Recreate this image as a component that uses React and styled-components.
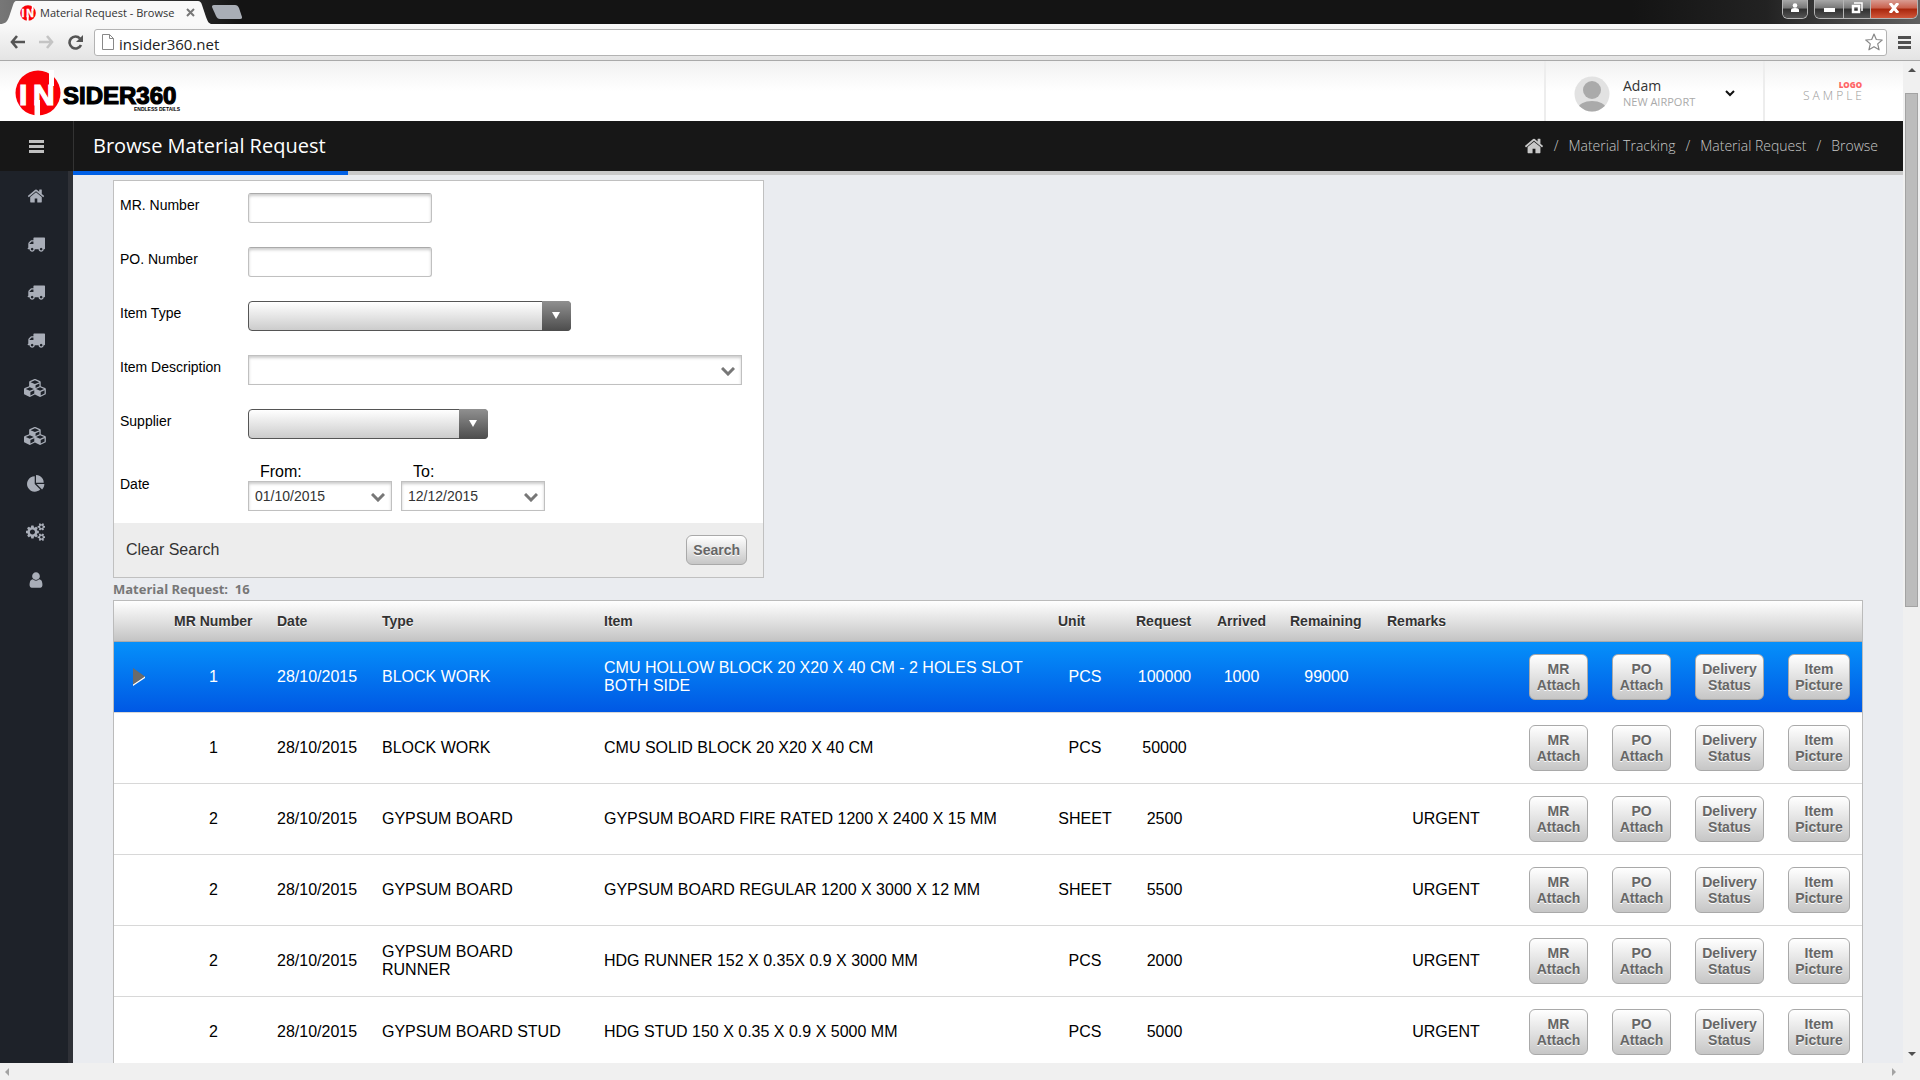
import React, { useState } from "react";
import styled, { createGlobalStyle } from "styled-components";

const ICONS = {
  home: {
    width: 1792,
    d: "M1472 992v480q0 26-19 45t-45 19h-384v-384h-256v384h-384q-26 0-45-19t-19-45v-480q0-1 .5-3t.5-3l575-474 575 474q1 2 1 6zm223-69l-62 74q-8 9-21 11h-3q-13 0-21-7l-692-577-692 577q-12 8-24 7-13-2-21-11l-62-74q-8-10-7-23.500t11-21.500l719-599q32-26 76-26t76 26l244 204v-195q0-14 9-23t23-9h192q14 0 23 9t9 23v408l219 182q10 8 11 21.500t-7 23.500z",
  },
  truck: {
    width: 1792,
    d: "M640 1408q0-52-38-90t-90-38-90 38-38 90 38 90 90 38 90-38 38-90zm-384-512h384v-256h-158q-13 0-22 9l-195 195q-9 9-9 22v30zm1280 512q0-52-38-90t-90-38-90 38-38 90 38 90 90 38 90-38 38-90zm256-1088v1024q0 15-4 26.500t-13.500 18.500-16.500 11.500-23.500 6-22.500 2-25.500 0-22.500-.5q0 106-75 181t-181 75-181-75-75-181h-384q0 106-75 181t-181 75-181-75-75-181h-64q-3 0-22.500.5t-25.500 0-22.500-2-23.500-6-16.500-11.500-13.500-18.500-4-26.500q0-26 19-45t45-19v-320q0-8-.5-35t0-38 2.500-34.500 6.500-37 14-30.500 22.500-30l198-198q19-19 50.500-32t58.500-13h160v-192q0-26 19-45t45-19h1024q26 0 45 19t19 45z",
  },
  cubes: {
    width: 2304,
    d: "M640 1632l384-192v-314l-384 164v342zm-64-454l404-173-404-173-404 173zm1088 454l384-192v-314l-384 164v342zm-64-454l404-173-404-173-404 173zm-448-293l384-165v-266l-384 164v267zm-64-379l441-189-441-189-441 189zm1088 518v416q0 36-19 67t-52 47l-448 224q-25 14-57 14t-57-14l-448-224q-4-2-7-4-2 2-7 4l-448 224q-25 14-57 14t-57-14l-448-224q-33-16-52-47t-19-67v-416q0-38 21.500-70t56.500-48l434-186v-400q0-38 21.500-70t56.500-48l448-192q23-10 50-10t50 10l448 192q35 16 56.500 48t21.500 70v400l434 186q36 16 57 48t21 70z",
  },
  pie: {
    width: 1792,
    d: "M768 890l546 546q-106 108-247.500 168t-298.500 60q-209 0-385.500-103t-279.500-279.500-103-385.500 103-385.500 279.500-279.500 385.500-103v762zm187 6h773q0 157-60 298.500t-168 247.500zm709-128h-768v-768q209 0 385.500 103t279.500 279.500 103 385.500z",
  },
  cogs: {
    width: 1920,
    d: "M896 896q0-106-75-181t-181-75-181 75-75 181 75 181 181 75 181-75 75-181zm768 512q0-52-38-90t-90-38-90 38-38 90q0 53 37.500 90.500t90.500 37.500 90.500-37.500 37.500-90.500zm0-1024q0-52-38-90t-90-38-90 38-38 90q0 53 37.500 90.500t90.500 37.500 90.500-37.500 37.500-90.500zm-384 421v185q0 10-7 19.500t-16 10.500l-155 24q-11 35-32 76 34 48 90 115 7 11 7 20 0 12-7 19-23 30-82.500 89.500t-78.500 59.500q-11 0-21-7l-115-90q-37 19-77 31-11 108-23 155-7 24-30 24h-186q-11 0-20-7.500t-10-17.500l-23-153q-34-10-75-31l-118 89q-7 7-20 7-11 0-21-8-144-133-144-160 0-9 7-19 10-14 41-53t47-61q-23-44-35-82l-152-24q-10-1-17-9.500t-7-19.500v-185q0-10 7-19.500t16-10.500l155-24q11-35 32-76-34-48-90-115-7-11-7-20 0-12 7-20 22-30 82-89t79-59q11 0 21 7l115 90q34-18 77-32 11-108 23-154 7-24 30-24h186q11 0 20 7.500t10 17.500l23 153q34 10 75 31l118-89q8-7 20-7 11 0 21 8 144 133 144 160 0 8-7 19-12 16-42 54t-45 60q23 48 34 82l152 23q10 2 17 10.500t7 19.500zm640 533v140q0 16-149 31-12 27-30 52 51 113 51 138 0 4-4 7-122 71-124 71-8 0-46-47t-52-68q-20 2-30 2t-30-2q-14 21-52 68t-46 47q-2 0-124-71-4-3-4-7 0-25 51-138-18-25-30-52-149-15-149-31v-140q0-16 149-31 13-29 30-52-51-113-51-138 0-4 4-7 4-2 35-20t59-34 30-16q8 0 46 46.500t52 67.500q20-2 30-2t30 2q51-71 92-112l6-2q4 0 124 70 4 3 4 7 0 25-51 138 17 23 30 52 149 15 149 31zm0-1024v140q0 16-149 31-12 27-30 52 51 113 51 138 0 4-4 7-122 71-124 71-8 0-46-47t-52-68q-20 2-30 2t-30-2q-14 21-52 68t-46 47q-2 0-124-71-4-3-4-7 0-25 51-138-18-25-30-52-149-15-149-31v-140q0-16 149-31 13-29 30-52-51-113-51-138 0-4 4-7 4-2 35-20t59-34 30-16q8 0 46 46.500t52 67.500q20-2 30-2t30 2q51-71 92-112l6-2q4 0 124 70 4 3 4 7 0 25-51 138 17 23 30 52 149 15 149 31z",
  },
  user: {
    width: 1792,
    d: "M1536 1399q0 109-62.500 187t-150.500 78h-854q-88 0-150.500-78t-62.500-187q0-85 8.500-160.500t31.500-152 58.500-131 94-89 134.500-34.500q131 128 313 128t313-128q76 0 134.500 34.500t94 89 58.500 131 31.500 152 8.500 160.500zm-256-887q0 159-112.500 271.500t-271.500 112.500-271.500-112.500-112.500-271.500 112.500-271.500 271.500-112.500 271.500 112.500 112.500 271.500z",
  },
};

const MENU = [
  ["home", "Home"],
  ["truck", "Material Tracking"],
  ["truck", "Deliveries"],
  ["truck", "Shipments"],
  ["cubes", "Inventory"],
  ["cubes", "Stock"],
  ["pie", "Reports"],
  ["cogs", "Settings"],
  ["user", "Account"],
];

const COLUMNS = [
  { title: "", width: 48 },
  { title: "MR Number", width: 103 },
  { title: "Date", width: 105 },
  { title: "Type", width: 222 },
  { title: "Item" },
  { title: "Unit", width: 78 },
  { title: "Request", width: 81 },
  { title: "Arrived", width: 73 },
  { title: "Remaining", width: 97 },
  { title: "Remarks", width: 142 },
  { title: "", width: 83 },
  { title: "", width: 83 },
  { title: "", width: 93 },
  { title: "", width: 86 },
];

const ROWS = [
  { mr: 1, type: "BLOCK WORK", item: "CMU HOLLOW BLOCK 20 X20 X 40 CM - 2 HOLES SLOT BOTH SIDE", unit: "PCS", request: 100000, arrived: 1000, remaining: 99000 },
  { mr: 1, type: "BLOCK WORK", item: "CMU SOLID BLOCK 20 X20 X 40 CM", unit: "PCS", request: 50000 },
  { mr: 2, type: "GYPSUM BOARD", item: "GYPSUM BOARD FIRE RATED 1200 X 2400 X 15 MM", unit: "SHEET", request: 2500, remarks: "URGENT" },
  { mr: 2, type: "GYPSUM BOARD", item: "GYPSUM BOARD REGULAR 1200 X 3000 X 12 MM", unit: "SHEET", request: 5500, remarks: "URGENT" },
  { mr: 2, type: "GYPSUM BOARD RUNNER", item: "HDG RUNNER 152 X 0.35X 0.9 X 3000 MM", unit: "PCS", request: 2000, remarks: "URGENT" },
  { mr: 2, type: "GYPSUM BOARD STUD", item: "HDG STUD 150 X 0.35 X 0.9 X 5000 MM", unit: "PCS", request: 5000, remarks: "URGENT" },
];

const ACTIONS = [
  ["MR", "Attach"],
  ["PO", "Attach"],
  ["Delivery", "Status"],
  ["Item", "Picture"],
];

const Icon = ({ name, size }) => (
  <svg
    height={size}
    width={(size * ICONS[name].width) / 1792}
    viewBox={`0 0 ${ICONS[name].width} 1792`}
    fill="currentColor"
    aria-hidden="true"
  >
    <path d={ICONS[name].d} />
  </svg>
);

const Badge = () => (
  <>
    <circle cx="23" cy="23" r="22.500" fill="#fb0007" />
    <rect x="34" y="0" width="5" height="16" fill="#fff" />
    <rect x="19.500" y="30" width="5.500" height="16" fill="#fff" />
    <g fill="#fff" stroke="#fff" strokeWidth="1.200" fontFamily="Liberation Sans, sans-serif" fontWeight="700" fontSize="30">
      <text x="4" y="34.500">I</text>
      <text x="18" y="34.500">N</text>
    </g>
  </>
);

const Logo = () => (
  <svg width="168" height="46" viewBox="0 0 168 46" role="img" aria-label="Insider360">
    <Badge />
    <g fontFamily="Liberation Sans, sans-serif" fontWeight="700" fill="#000">
      <text x="48" y="33.500" fontSize="24" stroke="#000" strokeWidth="1.200">SIDER360</text>
      <text x="119" y="40.500" fontSize="5">ENDLESS DETAILS</text>
    </g>
  </svg>
);

const Chevron = () => (
  <svg width="14" height="9" viewBox="0 0 14 9" fill="none" stroke="#777" strokeWidth="3">
    <path d="M1 1l6 6 6-6" />
  </svg>
);

const Browser = () => (
  <>
    <TitleBar>
      <svg width="16" height="24" viewBox="0 0 16 24">
        <path d="M0 24c5 0 7-2 9-7l4-12c1-3 2-4 3-4v23z" fill="#f9f9f9" />
      </svg>
      <Tab>
        <svg width="16" height="16" viewBox="0 0 46 46"><Badge /></svg>
        <TabTitle>Material Request - Browse</TabTitle>
        <PlainButton aria-label="Close tab">
          <svg width="9" height="9" viewBox="0 0 9 9" stroke="#777" strokeWidth="2"><path d="M1 1l7 7M8 1l-7 7" /></svg>
        </PlainButton>
      </Tab>
      <svg width="14" height="24" viewBox="0 0 14 24">
        <path d="M0 1c2 0 3 1 4 4l4 12c2 5 3 7 6 7H0z" fill="#f9f9f9" />
      </svg>
      <PlainButton aria-label="New tab">
        <svg width="30" height="14" viewBox="0 0 30 14"><path d="M2 0h21c2 0 3 1 4 3l3 9c0 1 0 2-2 2H8c-2 0-3-1-4-3L0 2c0-1 0-2 2-2z" fill="#a9aeb6" /></svg>
      </PlainButton>
      <WindowControls>
        <ControlGroup>
          <Control $width={24} aria-label="Profile">
            <svg width="10" height="10" viewBox="0 0 10 10" fill="#fff"><circle cx="5" cy="2.500" r="2.300" /><path d="M1 9V7q0-2 4-2t4 2v2z" /></svg>
          </Control>
        </ControlGroup>
        <ControlGroup>
          <Control $width={28} aria-label="Minimize">
            <svg width="11" height="10" viewBox="0 0 11 10"><path d="M0 5h11v4H0z" fill="#fff" /></svg>
          </Control>
          <Control $width={27} aria-label="Restore">
            <svg width="12" height="12" viewBox="0 0 12 12" fill="none" stroke="#fff"><path d="M3 1h8v8" strokeWidth="1.500" /><path d="M2 4h6v6H2z" strokeWidth="2.500" /></svg>
          </Control>
          <Control $width={47} $close aria-label="Close window">
            <svg width="12" height="10" viewBox="0 0 12 10" stroke="#fff" strokeWidth="3"><path d="M2 0l8 10M10 0L2 10" /></svg>
          </Control>
        </ControlGroup>
      </WindowControls>
    </TitleBar>
    <Toolbar>
      <PlainButton aria-label="Back">
        <svg width="15" height="14" viewBox="0 0 15 14" fill="none" stroke="#555" strokeWidth="2.600"><path d="M7 1L2 7l5 6M2 7h13" /></svg>
      </PlainButton>
      <PlainButton aria-label="Forward">
        <svg width="15" height="14" viewBox="0 0 15 14" fill="none" stroke="#c4c4c4" strokeWidth="2.600"><path d="M8 1l5 6-5 6M13 7H0" /></svg>
      </PlainButton>
      <PlainButton aria-label="Reload">
        <svg width="15" height="15" viewBox="0 0 15 15"><path d="M12 3.500A6 6 0 1 0 13 10" fill="none" stroke="#555" strokeWidth="2.600" /><path d="M15 0v7H8z" fill="#555" /></svg>
      </PlainButton>
      <AddressBox>
        <svg width="12" height="16" viewBox="0 0 12 16" fill="#fff" stroke="#888"><path d="M.5.5h7l4 4v11H.5zM7.500.5v4h4" /></svg>
        <Address aria-label="Address" defaultValue="insider360.net" />
        <PlainButton aria-label="Bookmark">
          <svg width="18" height="18" viewBox="0 0 18 18" fill="#fff" stroke="#888" strokeWidth="1.200" strokeLinejoin="round"><path d="M9 1l2.300 5.500 5.900.5-4.500 3.900 1.400 5.900L9 13.700l-5.100 3.100 1.400-5.900L.8 7l5.900-.5z" /></svg>
        </PlainButton>
      </AddressBox>
      <PlainButton aria-label="Menu">
        <svg width="13" height="13" viewBox="0 0 13 13" fill="#4f4f4f"><path d="M0 0h13v3H0zM0 5h13v3H0zM0 10h13v3H0z" /></svg>
      </PlainButton>
    </Toolbar>
  </>
);

const Header = () => (
  <HeaderBar>
    <LogoLink href="#"><Logo /></LogoLink>
    <UserMenu>
      <svg width="36" height="36" viewBox="0 0 36 36">
        <clipPath id="face"><circle cx="18" cy="18" r="17.500" /></clipPath>
        <circle cx="18" cy="18" r="17.500" fill="#e2e2e2" />
        <g clipPath="url(#face)" fill="#aaa"><circle cx="18" cy="14" r="9" /><ellipse cx="18" cy="33" rx="14" ry="8" /></g>
      </svg>
      <UserText>
        <UserName>Adam</UserName>
        <Project>NEW AIRPORT</Project>
      </UserText>
      <svg width="10" height="7" viewBox="0 0 10 7" fill="none" stroke="#111" strokeWidth="2"><path d="M1 1l4 4 4-4" /></svg>
    </UserMenu>
    <Sample>
      <SampleTop>LOGO</SampleTop>
      <SampleName>SAMPLE</SampleName>
    </Sample>
  </HeaderBar>
);

const PageBar = () => (
  <Bar>
    <Burger aria-label="Toggle menu">
      <svg width="15" height="13" viewBox="0 0 15 13" fill="#c0c0c0"><path d="M0 0h15v3H0zM0 5h15v3H0zM0 10h15v3H0z" /></svg>
    </Burger>
    <Title>Browse Material Request</Title>
    <Crumbs aria-label="Breadcrumb">
      <a href="#" aria-label="Home"><Icon name="home" size={20} /></a>
      <span>/</span>
      <a href="#">Material Tracking</a>
      <span>/</span>
      <a href="#">Material Request</a>
      <span>/</span>
      <a href="#">Browse</a>
    </Crumbs>
  </Bar>
);

const DropDown = ({ id, width, dark, value, label }) => (
  <SelectBox $width={width}>
    <Select id={id} $dark={dark} aria-label={label}>
      <option>{value}</option>
    </Select>
    <SelectArrow $dark={dark}>
      {dark ? (
        <svg width="8" height="7" viewBox="0 0 8 7"><path d="M0 0h8L4 7z" fill="#fff" /></svg>
      ) : (
        <Chevron />
      )}
    </SelectArrow>
  </SelectBox>
);

const SearchForm = () => (
  <Panel onSubmit={(e) => e.preventDefault()}>
    <Fields>
      <Label htmlFor="mr">MR. Number</Label>
      <TextInput id="mr" type="text" />
      <Label htmlFor="po">PO. Number</Label>
      <TextInput id="po" type="text" />
      <Label htmlFor="type">Item Type</Label>
      <DropDown id="type" width={323} dark value="" />
      <Label htmlFor="description">Item Description</Label>
      <DropDown id="description" width={494} value="" />
      <Label htmlFor="supplier">Supplier</Label>
      <DropDown id="supplier" width={240} dark value="" />
    </Fields>
    <DateFields>
      <DateTitle>Date</DateTitle>
      <div>
        <DateLabel htmlFor="from">From:</DateLabel>
        <DropDown id="from" width={144} value="01/10/2015" />
      </div>
      <div>
        <DateLabel htmlFor="to">To:</DateLabel>
        <DropDown id="to" width={144} value="12/12/2015" />
      </div>
    </DateFields>
    <PanelFooter>
      <ClearLink href="#">Clear Search</ClearLink>
      <GreyButton type="submit">Search</GreyButton>
    </PanelFooter>
  </Panel>
);

const RequestTable = () => {
  const [selected, setSelected] = useState(0);

  return (
    <Table>
      <colgroup>
        {COLUMNS.map((col, index) => (<Col key={index} $width={col.width} />))}
      </colgroup>
      <thead>
        <tr>
          {COLUMNS.map((col, index) => (<Th key={index}>{col.title}</Th>))}
        </tr>
      </thead>
      <tbody>
        {ROWS.map((row, index) => (
          <Row key={index} $active={index === selected} onClick={() => setSelected(index)}>
            <Td>
              {index === selected && (
                <Marker width="14" height="18" viewBox="0 0 14 18"><path d="M1 18v-2L13 8v2z" fill="#fff" /><path d="M1 0v16.500L13 8.500z" fill="#6b6b6b" /></Marker>
              )}
            </Td>
            <Td $center>{row.mr}</Td>
            <Td>28/10/2015</Td>
            <Td>{row.type}</Td>
            <Td>{row.item}</Td>
            <Td $center>{row.unit}</Td>
            <Td $center>{row.request}</Td>
            <Td $center>{row.arrived}</Td>
            <Td $center>{row.remaining}</Td>
            <Td $center>{row.remarks}</Td>
            {ACTIONS.map(([first, second]) => (
              <Td key={first}>
                <GreyButton $wide>{first}<br />{second}</GreyButton>
              </Td>
            ))}
          </Row>
        ))}
      </tbody>
    </Table>
  );
};

const App = () => (
  <Window>
    <GlobalStyle />
    <Browser />
    <Viewport>
      <Page>
        <Header />
        <PageBar />
        <Body>
          <Sidebar aria-label="Main">
            {MENU.map(([icon, label]) => (
              <SideLink key={label} href="#" aria-label={label}><Icon name={icon} size={18} /></SideLink>
            ))}
          </Sidebar>
          <Main>
            <Progress><ProgressValue /></Progress>
            <Content>
              <SearchForm />
              <Count>Material Request:&nbsp; 16</Count>
              <RequestTable />
            </Content>
          </Main>
        </Body>
      </Page>
      <ScrollY>
        <svg width="8" height="4" viewBox="0 0 8 4"><path d="M0 4l4-4 4 4z" fill="#505050" /></svg>
        <Thumb />
        <svg width="8" height="4" viewBox="0 0 8 4"><path d="M0 0l4 4 4-4z" fill="#505050" /></svg>
      </ScrollY>
    </Viewport>
    <ScrollX>
      <svg width="4" height="8" viewBox="0 0 4 8"><path d="M4 0L0 4l4 4z" fill="#a3a3a3" /></svg>
      <svg width="4" height="8" viewBox="0 0 4 8"><path d="M0 0l4 4-4 4z" fill="#a3a3a3" /></svg>
    </ScrollX>
  </Window>
);

export default App;

const GlobalStyle = createGlobalStyle`
  * {
    box-sizing: border-box;
  }
  body {
    margin: 0;
    font-family: "Liberation Sans", Arial, sans-serif;
    font-size: 16px;
    color: #000;
  }
  a {
    color: inherit;
    text-decoration: none;
  }
  svg {
    display: block;
    flex: none;
  }
`;

const Window = styled.div`
  display: flex;
  flex-direction: column;
  height: 100vh;
  overflow: hidden;
`;
const TitleBar = styled.div`
  display: flex;
  align-items: center;
  flex: none;
  height: 24px;
  background: linear-gradient(90deg, #777 0, #141414 240px, #141414 85%, #222 92%, #606060 100%);
`;
const Tab = styled.div`
  display: flex;
  align-items: center;
  gap: 4px;
  width: 182px;
  height: 23px;
  margin-top: 1px;
  padding: 0 3px 0 4px;
  background: #f9f9f9;
`;
const TabTitle = styled.span`
  flex: 1;
  font: 11px/18px "Open Sans", sans-serif;
  color: #333;
  white-space: nowrap;
`;
const PlainButton = styled.button`
  flex: none;
  padding: 0;
  border: 0;
  background: none;
  cursor: pointer;
`;
const WindowControls = styled.div`
  display: flex;
  align-self: flex-start;
  gap: 6px;
  margin-left: auto;
  margin-right: 2px;
`;
const ControlGroup = styled.div`
  display: flex;
  height: 19px;
  border: 1px solid #b5b5b5;
  border-top: 0;
  border-radius: 0 0 6px 6px;
  overflow: hidden;
`;
const Control = styled.button`
  display: flex;
  align-items: center;
  justify-content: center;
  width: ${({ $width }) => $width}px;
  height: 18px;
  padding: 0 0 2px;
  border: 0;
  background: ${({ $close }) =>
    $close
      ? "linear-gradient(#d99c92 0, #c9604c 45%, #a8260c 50%, #d0563a 100%)"
      : "linear-gradient(#a8a8a8 0, #777 45%, #2f2f2f 50%, #555 100%)"};

  & + & {
    border-left: 1px solid #b5b5b5;
  }
`;
const Toolbar = styled.div`
  display: flex;
  align-items: center;
  flex: none;
  gap: 14px;
  height: 37px;
  padding: 0 9px 0 10px;
  background: linear-gradient(#f9f9f9, #e4e4e4);
  border-bottom: 1px solid #a9a9a9;
`;
const AddressBox = styled.div`
  display: flex;
  align-items: center;
  flex: 1;
  gap: 5px;
  height: 27px;
  margin: 0 -3px;
  padding: 0 3px 0 7px;
  background: #fff;
  border: 1px solid #b3b3b3;
  border-radius: 3px;
`;
const Address = styled.input`
  flex: 1;
  padding: 4px 0 0;
  border: 0;
  outline: 0;
  font: 15px/20px "Open Sans", sans-serif;
  color: #222;
`;
const Viewport = styled.div`
  display: flex;
  flex: 1;
  min-height: 0;
`;
const Page = styled.div`
  display: flex;
  flex-direction: column;
  flex: 1;
  min-width: 0;
  overflow: hidden;
  background: #eaecf0;
`;
const HeaderBar = styled.header`
  display: flex;
  flex: none;
  height: 60px;
  background: linear-gradient(#f1f1f1, #fff 50%);
`;
const LogoLink = styled.a`
  flex: 1;
  padding: 9px 15px;
`;
const UserMenu = styled.div`
  display: flex;
  align-items: center;
  width: 219px;
  padding: 5px 0 0 28px;
  border-left: 2px solid #ededed;
`;
const UserText = styled.div`
  width: 102px;
  margin-left: 13px;
  font-family: "Open Sans", sans-serif;
`;
const UserName = styled.div`
  font-size: 14px;
  line-height: 16px;
  color: #333;
`;
const Project = styled.div`
  font-size: 11px;
  line-height: 16px;
  color: #aaa;
`;
const Sample = styled.div`
  display: flex;
  flex-direction: column;
  align-items: flex-end;
  width: 140px;
  padding: 19px 38px 0 0;
  border-left: 2px solid #ededed;
  font-family: "Open Sans", sans-serif;
`;
const SampleTop = styled.span`
  font-size: 8px;
  font-weight: 800;
  line-height: 10px;
  color: #ff6464;
  padding-right: 3px;
`;
const SampleName = styled.span`
  font-size: 12px;
  font-weight: 300;
  line-height: 12px;
  letter-spacing: 3px;
  color: #999;
`;
const Bar = styled.div`
  display: flex;
  align-items: center;
  flex: none;
  height: 50px;
  background: #171717;
  font-family: "Open Sans", sans-serif;
`;
const Burger = styled.button`
  display: flex;
  align-items: center;
  width: 74px;
  height: 50px;
  padding: 0 29px;
  border: 0;
  border-right: 1px solid #333;
  background: none;
`;
const Title = styled.h1`
  flex: 1;
  margin: 0;
  padding-left: 19px;
  font-size: 20px;
  font-weight: 400;
  line-height: 26px;
  color: #fff;
`;
const Crumbs = styled.nav`
  display: flex;
  align-items: center;
  gap: 10px;
  padding-right: 25px;
  font-size: 14px;
  font-weight: 300;
  line-height: 20px;
  color: #c8c8c8;
`;
const Body = styled.div`
  display: flex;
  flex: 1;
  min-height: 0;
`;
const Sidebar = styled.nav`
  flex: none;
  width: 73px;
  padding-top: 1px;
  background: #1e2229;
  border-right: 5px solid #2f3137;
`;
const SideLink = styled.a`
  display: flex;
  align-items: center;
  justify-content: center;
  height: 48px;
  padding-left: 3px;
  color: #a9aeb8;
`;
const Main = styled.main`
  flex: 1;
  min-width: 0;
`;
const Progress = styled.div`
  height: 4px;
  background: #c9c9c9;
`;
const ProgressValue = styled.div`
  width: 275px;
  height: 4px;
  background: #0060e6;
`;
const Content = styled.div`
  padding: 5px 40px 0;
`;
const Panel = styled.form`
  width: 651px;
  background: #fff;
  border: 1px solid #c0c0c0;
`;
const Fields = styled.div`
  display: grid;
  grid-template-columns: 128px 1fr;
  row-gap: 24px;
  padding: 12px 6px 0;
`;
const Label = styled.label`
  font-size: 14px;
  line-height: 24px;
`;
const TextInput = styled.input`
  width: 184px;
  height: 30px;
  border: 1px solid #c0c0c0;
  border-top-color: #aaa;
  border-radius: 3px;
  box-shadow: inset 0 2px 3px #ccc;
`;
const SelectBox = styled.div`
  display: grid;
  width: ${({ $width }) => $width}px;
  height: 30px;
`;
const Select = styled.select`
  grid-area: 1 / 1;
  appearance: none;
  height: 30px;
  padding: 0 6px;
  border: 1px solid ${({ $dark }) => ($dark ? "#555" : "#c0c0c0")};
  border-radius: ${({ $dark }) => ($dark ? 4 : 0)}px;
  background: ${({ $dark }) => ($dark ? "linear-gradient(#fff, #ccc)" : "#fff")};
  box-shadow: ${({ $dark }) => ($dark ? "none" : "inset 0 2px 3px #ccc")};
  font: 14px/20px "Liberation Sans", Arial, sans-serif;
  color: #333;
`;
const SelectArrow = styled.span`
  grid-area: 1 / 1;
  justify-self: end;
  display: flex;
  align-items: center;
  justify-content: center;
  width: 29px;
  height: 30px;
  padding: ${({ $dark }) => ($dark ? "0 2px 1px 0" : "2px 0 0")};
  border-radius: 0 4px 4px 0;
  background: ${({ $dark }) => ($dark ? "linear-gradient(#909090, #4c4c4c)" : "none")};
  pointer-events: none;
`;
const DateFields = styled.div`
  display: flex;
  gap: 9px;
  padding: 24px 6px 12px;
`;
const DateTitle = styled.div`
  width: 119px;
  padding-top: 9px;
  font-size: 14px;
  line-height: 24px;
`;
const DateLabel = styled.label`
  display: block;
  padding-left: 12px;
  line-height: 18px;
`;
const PanelFooter = styled.div`
  display: flex;
  align-items: center;
  justify-content: space-between;
  height: 54px;
  padding: 0 16px 0 12px;
  background: #ededed;
`;
const ClearLink = styled.a`
  color: #333;
`;
const GreyButton = styled.button`
  width: ${({ $wide }) => ($wide ? "100%" : "auto")};
  padding: 6px;
  border: 1px solid #a9a9a9;
  border-radius: 6px;
  background: linear-gradient(#fff, #c6c6c6);
  font: bold 14px/16px "Liberation Sans", Arial, sans-serif;
  color: #666;
  text-shadow: 0 1px 0 #fff;
  white-space: nowrap;
  cursor: pointer;
`;
const Count = styled.div`
  padding: 2px 0;
  font: bold 13px/18px "Open Sans", sans-serif;
  color: #777;
`;
const Table = styled.table`
  width: 100%;
  table-layout: fixed;
  border-collapse: separate;
  border-spacing: 0;
  background: #fff;
  border: 1px solid #bbb;
`;
const Col = styled.col`
  width: ${({ $width }) => ($width ? `${$width}px` : "auto")};
`;
const Th = styled.th`
  height: 41px;
  padding: 0 12px;
  background: linear-gradient(#fff, #c4c4c4);
  border-bottom: 1px solid #aaa;
  font-size: 14px;
  text-align: left;
  color: #333;
  text-shadow: 0 1px 0 #fff;
  white-space: nowrap;
`;
const Td = styled.td`
  height: 71px;
  padding: 0 12px;
  border-bottom: 1px solid #d8d8d8;
  line-height: 18px;
  text-align: ${({ $center }) => ($center ? "center" : "left")};
`;
const Row = styled.tr`
  color: ${({ $active }) => ($active ? "#fff" : "#000")};

  ${Td} {
    background: ${({ $active }) => ($active ? "linear-gradient(#0590fa, #0058e4)" : "#fff")};
  }
`;
const Marker = styled.svg`
  margin-left: 6px;
`;
const ScrollY = styled.div`
  display: flex;
  flex-direction: column;
  align-items: center;
  width: 17px;
  padding: 7px 0;
  background: #f0f0f0;

  svg:last-child {
    margin-top: auto;
  }
`;
const Thumb = styled.div`
  width: 13px;
  height: 52%;
  margin-top: 21px;
  background: #bcbcbc;
  border: 1px solid #a3a3a3;
`;
const ScrollX = styled.div`
  display: flex;
  align-items: center;
  justify-content: space-between;
  flex: none;
  height: 17px;
  padding: 0 24px 0 5px;
  background: #f0f0f0;
`;
